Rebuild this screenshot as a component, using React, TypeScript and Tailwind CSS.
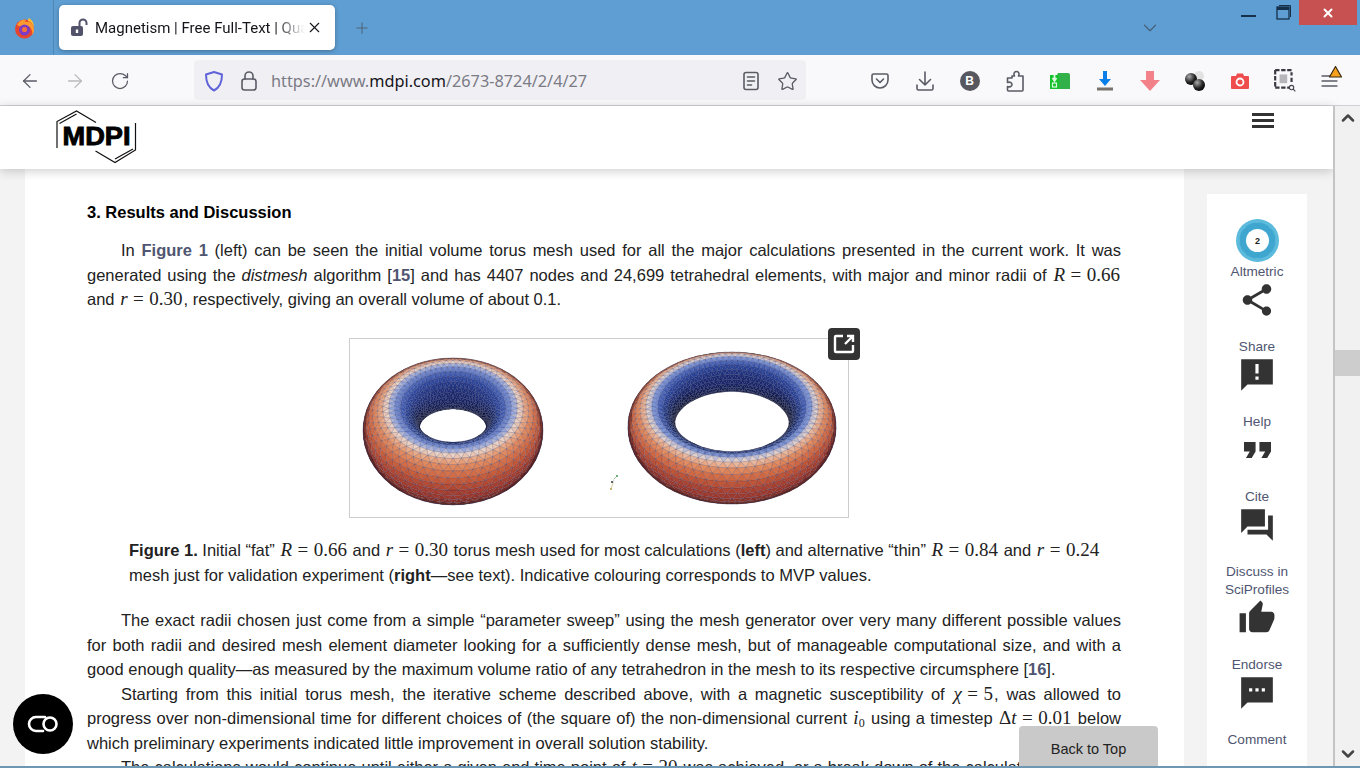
import React, { useMemo } from 'react';
import { ArrowLeft, ArrowRight, RotateCw, Star, Plus, X, ChevronDown, ChevronUp } from 'lucide-react';

const BODY = "font-['Liberation_Sans',Arial,sans-serif]";
const UI = "font-['Noto_Sans','Open_Sans',sans-serif]";

// colour ramp for the torus, t is -1 (inner) to 1 (outer)
const RAMP: [number, number[]][] = [
    [-1, [24, 36, 104]],
    [-0.55, [50, 78, 168]],
    [-0.15, [140, 162, 222]],
    [0.06, [234, 212, 200]],
    [0.36, [232, 150, 104]],
    [0.72, [206, 98, 60]],
    [1, [156, 54, 42]],
];

function rampColor(t: number, shade: number) {
    let i = 0;
    while (i < RAMP.length - 2 && t > RAMP[i + 1][0]) i++;
    const [a, ca] = RAMP[i];
    const [b, cb] = RAMP[i + 1];
    const k = Math.max(0, Math.min(1, (t - a) / (b - a)));
    const c = ca.map((v, n) => Math.round((v + (cb[n] - v) * k) * shade));
    return `rgb(${c[0]},${c[1]},${c[2]})`;
}

// Builds the triangles of a torus, fitted into the given box
function buildTorus(R: number, r: number, sinE: number, N: number, M: number, box: number[]) {
    const cosE = Math.sqrt(1 - sinE * sinE);
    const D = 4.5;
    const pts: { x: number; y: number; z: number; c: number; s: number; nv: number }[][] = [];
    for (let j = 0; j < M; j++) {
        const row = [];
        const th = (j / M) * Math.PI * 2;
        for (let i = 0; i < N; i++) {
            const ph = ((i + (j % 2) * 0.5) / N) * Math.PI * 2;
            const X = (R + r * Math.cos(th)) * Math.cos(ph);
            const Y = (R + r * Math.cos(th)) * Math.sin(ph);
            const Z = r * Math.sin(th);
            const ny = Math.cos(th) * Math.sin(ph);
            const nz = Math.sin(th);
            const depth = -Y * cosE + Z * sinE;
            const p = D / (D - depth);
            row.push({
                x: X * p,
                y: -(Y * sinE + Z * cosE) * p,
                z: depth,
                c: Math.cos(th),
                s: nz,
                nv: -ny * cosE + nz * sinE,
            });
        }
        pts.push(row);
    }
    const all = pts.flat();
    const minX = Math.min(...all.map((p) => p.x));
    const maxX = Math.max(...all.map((p) => p.x));
    const minY = Math.min(...all.map((p) => p.y));
    const maxY = Math.max(...all.map((p) => p.y));
    const sx = box[2] / (maxX - minX);
    const sy = box[3] / (maxY - minY);
    const px = (p: { x: number }) => (box[0] + (p.x - minX) * sx).toFixed(1);
    const py = (p: { y: number }) => (box[1] + (p.y - minY) * sy).toFixed(1);

    const tris: { d: string; z: number; fill: string; o: number }[] = [];
    const add = (a: any, b: any, c: any) => {
        const nv = (a.nv + b.nv + c.nv) / 3;
        if (nv < -0.12) return;
        const t = (a.c + b.c + c.c) / 3;
        const up = Math.max((a.s + b.s + c.s) / 3, 0);
        const shade = Math.min(1, 0.16 + 0.25 * up + Math.pow(Math.max(nv, 0), 0.78));
        tris.push({
            d: `M${px(a)} ${py(a)}L${px(b)} ${py(b)}L${px(c)} ${py(c)}Z`,
            z: (a.z + b.z + c.z) / 3,
            fill: rampColor(t, shade),
            o: 0.14 + 0.32 * Math.max(nv, 0),
        });
    };
    for (let j = 0; j < M; j++) {
        const jn = (j + 1) % M;
        for (let i = 0; i < N; i++) {
            const inx = (i + 1) % N;
            if (j % 2 === 0) {
                add(pts[j][i], pts[j][inx], pts[jn][i]);
                add(pts[j][inx], pts[jn][inx], pts[jn][i]);
            } else {
                add(pts[j][i], pts[j][inx], pts[jn][inx]);
                add(pts[j][i], pts[jn][inx], pts[jn][i]);
            }
        }
    }
    tris.sort((a, b) => a.z - b.z);
    return tris;
}

function TorusFigure() {
    const left = useMemo(() => buildTorus(0.66, 0.3, 0.72, 58, 32, [13, 19, 180, 147]), []);
    const right = useMemo(() => buildTorus(0.84, 0.24, 0.66, 72, 26, [278, 13, 208, 152]), []);
    return (
        <svg width={498} height={178} viewBox="0 0 498 178" className="block blur-[0.3px]">
            {[...left, ...right].map((t, i) => (
                <path key={i} d={t.d} fill={t.fill} stroke="#20265c" strokeOpacity={t.o} strokeWidth={0.45} />
            ))}
            <g strokeWidth={0.6} fill="none">
                <path d="M263 144l1 -4" stroke="#bbb" />
                <path d="M261 150l2 -6" stroke="#c9b36a" />
                <path d="M264 140l3 -3" stroke="#6a9a6a" />
            </g>
            <circle cx={262} cy={143} r={1} fill="#333" />
            <circle cx={267} cy={137} r={1} fill="#4a9a5a" />
            <circle cx={261} cy={150} r={1} fill="#b6a04a" />
        </svg>
    );
}

function FirefoxLogo() {
    return (
        <svg width={22} height={22} viewBox="0 0 22 22">
            <circle cx={10.5} cy={12} r={9.5} fill="#e8452f" />
            <path d="M3 8C5 3 10 2 12 3c-1 1-1 2-1 2 5-1 9 2 9 8 0 2-1 4-2 5 1-4-1-8-4-9-2 0-5 0-6 1C6 9 4 9 3 8z" fill="#ff9a2e" />
            <path d="M15 1c3 2 5 5 5 9-1-3-3-5-6-6 0-1 0-2 1-3z" fill="#ffbd2e" />
            <circle cx={10.5} cy={13} r={5.5} fill="#7b3bc4" />
            <circle cx={10.5} cy={12.5} r={2.6} fill="#f4703a" />
        </svg>
    );
}

function ToolIcon({ children }: { children: React.ReactNode }) {
    return <div className="flex h-[40px] w-[45px] items-center justify-center pt-[2px]">{children}</div>;
}

const G = { fill: 'none', stroke: '#5b5b66', strokeWidth: 1.6, strokeLinecap: 'round', strokeLinejoin: 'round' } as const;

function TabBar() {
    return (
        <div className="flex h-[55px] shrink-0 bg-[#5f9ed2]">
            <div className="flex h-full w-[54px] items-center justify-center border-r border-[#4f86b4] pr-[3px]">
                <FirefoxLogo />
            </div>
            <div className="relative mt-[5px] ml-[5px] flex h-[45px] w-[276px] items-center rounded-[5px] bg-white pl-[11px] shadow-[0_1px_4px_rgba(0,0,0,0.3)]">
                <svg width={19} height={19} viewBox="0 0 19 19" className="shrink-0">
                    <rect x={1} y={8} width={12} height={10} rx={2} fill="#52526a" />
                    <rect x={5.8} y={11.5} width={2.4} height={3.5} fill="#fff" />
                    <path d="M9.5 8V5a3.5 3.5 0 0 1 7 0v2" fill="none" stroke="#52526a" strokeWidth={2} />
                </svg>
                <span className="ml-[6px] w-[210px] overflow-hidden pt-[2px] font-['Roboto',sans-serif] text-[15px] whitespace-nowrap text-[#15141a] [mask-image:linear-gradient(to_right,black_180px,transparent_210px)]">
                    Magnetism | Free Full-Text | Quantitative
                </span>
                <X size={17} strokeWidth={1.6} className="absolute right-[12px] text-[#15141a]" />
            </div>
            <div className="flex h-full w-[54px] items-center justify-center">
                <Plus size={18} strokeWidth={1.4} className="text-[#4f6479]" />
            </div>
            <div className="flex flex-1 items-center justify-end">
                <ChevronDown size={22} strokeWidth={1.3} className="text-[#46607a]" />
            </div>
            <div className="ml-[80px] flex h-[25px] items-start pr-[3px]">
                <div className="mt-[15px] h-[2px] w-[15px] bg-[#14304a]" />
                <svg width={16} height={16} viewBox="0 0 16 16" className="mt-[4px] ml-[20px]">
                    <path d="M3 1.5h11.5V13" fill="none" stroke="#14304a" strokeWidth={1} />
                    <rect x={1} y={3} width={12} height={12} fill="none" stroke="#14304a" strokeWidth={1.3} />
                    <rect x={1} y={3} width={12} height={3} fill="#14304a" />
                </svg>
                <div className="ml-[7px] flex h-[25px] w-[58px] items-center justify-center bg-[#c75050]">
                    <X size={14} strokeWidth={3.4} className="text-white" />
                </div>
            </div>
        </div>
    );
}

function NavBar() {
    return (
        <div className="flex h-[51px] shrink-0 items-center border-b border-[#cfcfd4] bg-[#f9f9fb]">
            <div className="flex w-[194px] items-center pl-[7px]">
                <ToolIcon><ArrowLeft size={22} strokeWidth={1.4} className="text-[#5b5b66]" /></ToolIcon>
                <ToolIcon><ArrowRight size={22} strokeWidth={1.4} className="text-[#b9b9be]" /></ToolIcon>
                <ToolIcon><RotateCw size={20} strokeWidth={1.5} className="text-[#5b5b66]" /></ToolIcon>
            </div>
            <div className="flex h-[40px] w-[612px] items-center rounded-[4px] bg-[#f0f0f4] pt-[2px]">
                <svg width={20} height={22} viewBox="0 0 20 22" className="ml-[10px]">
                    <path d="M10 2l8 2.5c0 8-2 13-8 16C4 17.500 2 12.500 2 4.500z" fill="none" stroke="#5f63d8" strokeWidth={2} strokeLinejoin="round" />
                </svg>
                <svg width={18} height={22} viewBox="0 0 18 22" className="ml-[16px]">
                    <rect x={2} y={9} width={14} height={11} rx={2.500} {...G} />
                    <path d="M5 9V6a4 4 0 0 1 8 0v3" {...G} />
                </svg>
                <span className={`${UI} ml-[13px] text-[16.300px] whitespace-nowrap text-[#7b7b85]`}>
                    https://www.<span className="text-[#15141a]">mdpi.com</span>/2673-8724/2/4/27
                </span>
                <div className="ml-auto flex items-center pr-[8px]">
                    <svg width={16} height={20} viewBox="0 0 16 20" className="mr-[18px]">
                        <rect x={1} y={1.500} width={14} height={17} rx={2} {...G} />
                        <path d="M4.500 6h7M4.500 10h7M4.500 14h4" {...G} />
                    </svg>
                    <Star size={21} strokeWidth={1.5} className="text-[#5b5b66]" />
                </div>
            </div>
            <div className="ml-[51px] flex items-center">
                <ToolIcon>
                    <svg width={18} height={18} viewBox="0 0 18 18">
                        <path d="M2.500 2h13A1.500 1.500 0 0 1 17 3.500V8a8 8 0 0 1-16 0V3.500A1.500 1.500 0 0 1 2.500 2z" {...G} />
                        <path d="M5.500 7L9 10.500 12.500 7" {...G} />
                    </svg>
                </ToolIcon>
                <ToolIcon>
                    <svg width={20} height={22} viewBox="0 0 20 22">
                        <path d="M10 2v13M4.500 9.500L10 15l5.500-5.500M2 15v3.500a1.500 1.500 0 0 0 1.500 1.500h13a1.500 1.500 0 0 0 1.500-1.500V15" {...G} />
                    </svg>
                </ToolIcon>
                <ToolIcon>
                    <div className={`${BODY} flex h-[20px] w-[20px] items-center justify-center rounded-full bg-[#57575f] text-[12px] font-bold text-white`}>B</div>
                </ToolIcon>
                <ToolIcon>
                    <svg width={20} height={22} viewBox="0 0 20 22">
                        <path d="M7 6h2.500C8 3 10 1.500 11.500 1.500S15 3 13.500 6H18v14a1 1 0 0 1-1 1H3.500a1 1 0 0 1-1-1v-3.500C5 17.500 7 16 7 14.500S5 11.500 2.500 12.500V8h4.500z" {...G} />
                    </svg>
                </ToolIcon>
                <ToolIcon>
                    <svg width={21} height={18} viewBox="0 0 21 18">
                        <path d="M1 3h7l1-2h10a2 2 0 0 1 2 2v14H1z" fill="#32b04a" />
                        <path d="M1 3h9v14H1z" fill="#14c22e" />
                        <path d="M5.500 3v5M3.500 6l2 3 2-3" fill="none" stroke="#dff7df" strokeWidth={1.800} />
                        <rect x={3.500} y={11} width={4} height={4} fill="none" stroke="#dff7df" strokeWidth={1.200} />
                    </svg>
                </ToolIcon>
                <ToolIcon>
                    <svg width={18} height={20} viewBox="0 0 18 20">
                        <path d="M7 0h4v8h4l-6 7-6-7h4z" fill="#0b7fe8" />
                        <rect x={1} y={16.500} width={16} height={3} fill="#77726c" />
                    </svg>
                </ToolIcon>
                <ToolIcon>
                    <svg width={20} height={20} viewBox="0 0 20 20">
                        <path d="M6 0h8v9h6L10 20 0 9h6z" fill="#f38189" />
                    </svg>
                </ToolIcon>
                <ToolIcon>
                    <svg width={22} height={22} viewBox="0 0 22 22">
                        <defs>
                            <radialGradient id="ball" cx="0.35" cy="0.3" r="0.8">
                                <stop offset="0" stopColor="#aaa" />
                                <stop offset="0.6" stopColor="#222" />
                                <stop offset="1" stopColor="#000" />
                            </radialGradient>
                        </defs>
                        <circle cx={15} cy={6} r={5} fill="#e2e2e2" />
                        <circle cx={7} cy={9} r={6} fill="url(#ball)" />
                        <circle cx={15} cy={15} r={6} fill="url(#ball)" />
                    </svg>
                </ToolIcon>
                <ToolIcon>
                    <svg width={18} height={16} viewBox="0 0 18 16">
                        <path d="M1 3h4l1-2.500h6L13 3h4a1 1 0 0 1 1 1v11a1 1 0 0 1-1 1H1a1 1 0 0 1-1-1V4a1 1 0 0 1 1-1z" fill="#ef4d4d" />
                        <circle cx={9} cy={9} r={3.500} fill="none" stroke="#fff" strokeWidth={1.800} />
                    </svg>
                </ToolIcon>
                <ToolIcon>
                    <svg width={22} height={24} viewBox="0 0 20 22">
                        <path d="M1 1h15M1 17h13M1 1v16M16 3v3M16 8v5" fill="none" stroke="#3a3a42" strokeWidth={2} strokeDasharray="4 1.500" />
                        <rect x={5} y={5} width={7} height={8} fill="#b5b5ba" />
                        <circle cx={16} cy={17} r={2} fill="none" stroke="#44444c" strokeWidth={1} />
                        <path d="M17.500 18.500L19.500 20.500" stroke="#44444c" strokeWidth={1} />
                    </svg>
                </ToolIcon>
                <div className="relative">
                    <ToolIcon>
                        <svg width={18} height={14} viewBox="0 0 18 14">
                            <path d="M1 2h8M1 7h15M1 12h15" fill="none" stroke="#5b5b66" strokeWidth={1.300} strokeLinecap="round" />
                        </svg>
                    </ToolIcon>
                    <svg width={15} height={14} viewBox="0 0 15 14" className="absolute top-[5px] left-[21px]">
                        <path d="M7.500 1.500L13.500 12H1.500z" fill="#f6a21e" stroke="#3a2a10" strokeWidth={1.200} strokeLinejoin="round" />
                    </svg>
                </div>
            </div>
        </div>
    );
}

function PageHeader() {
    return (
        <div className="relative z-10 flex h-[63px] shrink-0 items-start justify-between bg-white pr-[59px] pl-[56px] shadow-[0_2px_10px_rgba(0,0,0,0.2)]">
            <svg width={81} height={54} viewBox="0 0 81 54" className="mt-[4px]">
                <g fill="none" stroke="#111" strokeWidth={1.200}>
                    <path d="M1 38V11.500L20.500 1 40 12.500" />
                    <path d="M3.500 13.500L20.500 4" />
                    <path d="M79.500 13v27L59 52.500 39.500 41" />
                    <path d="M77 39L59 49" />
                </g>
                <text x={6.500} y={35} fontFamily="Liberation Sans, Arial, sans-serif" fontWeight={700} fontSize={26.500} stroke="#000" strokeWidth={0.9} fill="#000" textLength={68} lengthAdjust="spacingAndGlyphs">MDPI</text>
            </svg>
            <div className="mt-[7px] flex w-[22px] flex-col gap-[3.500px]">
                <div className="h-[2.500px] bg-[#333]" />
                <div className="h-[2.500px] bg-[#333]" />
                <div className="h-[2.500px] bg-[#333]" />
            </div>
        </div>
    );
}

function Mx({ children }: { children: React.ReactNode }) {
    return <span className="mx-[1px] inline-block indent-0 font-['Liberation_Serif',serif] text-[19px] leading-none whitespace-nowrap">{children}</span>;
}

function Eq() {
    return <span className="mx-[5.500px]">=</span>;
}

function Just({ children, first }: { children: React.ReactNode; first?: boolean }) {
    return (
        <div className={`text-justify whitespace-nowrap [text-align-last:justify] ${first ? 'indent-[34px]' : ''}`}>
            {children}
        </div>
    );
}

function Ref({ children }: { children: React.ReactNode }) {
    return <b className="text-[#4f5671]">{children}</b>;
}

function Article() {
    return (
        <div className={`${BODY} h-full w-[1159px] shrink-0 overflow-hidden bg-white pt-[31px] pr-[63px] pl-[62px] text-[16.500px] leading-[24.500px] text-[#222]`}>
            <div className="mb-[14px] leading-[24px] font-bold text-black">3. Results and Discussion</div>
            <Just first>In <Ref>Figure 1</Ref> (left) can be seen the initial volume torus mesh used for all the major calculations presented in the current work. It was</Just>
            <Just>generated using the <i>distmesh</i> algorithm [<Ref>15</Ref>] and has 4407 nodes and 24,699 tetrahedral elements, with major and minor radii of <Mx><i>R</i><Eq />0.66</Mx></Just>
            <div>and <Mx><i>r</i><Eq />0.30</Mx>, respectively, giving an overall volume of about 0.1.</div>

            <div className="relative mt-[26.500px] ml-[262px] h-[180px] w-[500px] border border-[#ccc]">
                <TorusFigure />
                <div className="absolute -top-[11px] -right-[12px] flex h-[32px] w-[32px] items-center justify-center rounded-[4px] bg-[#333]">
                    <svg width={24} height={24} viewBox="0 0 24 24" fill="none" stroke="#fff" strokeWidth={2.400}>
                        <path d="M11 4H4a1 1 0 0 0-1 1v14a1 1 0 0 0 1 1h16a1 1 0 0 0 1-1v-6" />
                        <path d="M15 4h6v6M21 4l-8 8" />
                    </svg>
                </div>
            </div>

            <div className="mt-[20px] pl-[42px] whitespace-nowrap">
                <div><b>Figure 1.</b> Initial “fat” <Mx><i>R</i><Eq />0.66</Mx> and <Mx><i>r</i><Eq />0.30</Mx> torus mesh used for most calculations (<b>left</b>) and alternative “thin” <Mx><i>R</i><Eq />0.84</Mx> and <Mx><i>r</i><Eq />0.24</Mx></div>
                <div>mesh just for validation experiment (<b>right</b>—see text). Indicative colouring corresponds to MVP values.</div>
            </div>

            <div className="mt-[21px]">
                <Just first>The exact radii chosen just come from a simple “parameter sweep” using the mesh generator over very many different possible values</Just>
                <Just>for both radii and desired mesh element diameter looking for a sufficiently dense mesh, but of manageable computational size, and with a</Just>
                <div>good enough quality—as measured by the maximum volume ratio of any tetrahedron in the mesh to its respective circumsphere [<Ref>16</Ref>].</div>
                <Just first>Starting from this initial torus mesh, the iterative scheme described above, with a magnetic susceptibility of <Mx><i>χ</i><Eq />5</Mx>, was allowed to</Just>
                <Just>progress over non-dimensional time for different choices of (the square of) the non-dimensional current <Mx><i>i</i><sub className="text-[12px]">0</sub></Mx> using a timestep <Mx>Δ<i>t</i><Eq />0.01</Mx> below</Just>
                <div>which preliminary experiments indicated little improvement in overall solution stability.</div>
                <Just first>The calculations would continue until either a given end time point of <Mx><i>t</i><Eq />20</Mx> was achieved, or a break down of the calculations occurred</Just>
            </div>
        </div>
    );
}

function MatIcon({ d }: { d: string }) {
    return (
        <svg width={38} height={38} viewBox="0 0 24 24" fill="#333" className="block">
            <path d={d} fillRule="evenodd" />
        </svg>
    );
}

function QuoteIcon() {
    return (
        <div className="flex h-[38px] w-[38px] items-center justify-center">
            <svg width={27} height={16} viewBox="5 7 14 10" preserveAspectRatio="none" fill="#333">
                <path d="M6 17h3l2-4V7H5v6h3zm8 0h3l2-4V7h-6v6h3z" />
            </svg>
        </div>
    );
}

function SideItem({ icon, label }: { icon: React.ReactNode; label: React.ReactNode }) {
    return (
        <div className="flex flex-col items-center">
            {icon}
            <div className="mt-[18.500px] mb-[0.500px] text-center leading-[18px]">{label}</div>
        </div>
    );
}

function Altmetric() {
    return (
        <svg width={43} height={43} viewBox="0 0 43 43">
            <circle cx={21.500} cy={21.500} r={21.500} fill="#5cbbdc" />
            {[0, 45, 90, 135, 180, 225, 270, 315].map((a) => (
                <ellipse key={a} cx={21.500} cy={9} rx={12} ry={5} fill="#2f9cc8" fillOpacity={0.4} transform={`rotate(${a} 21.500 21.500)`} />
            ))}
            <circle cx={21.500} cy={21.500} r={11.500} fill="#fff" />
            <text x={21.500} y={25} textAnchor="middle" fontFamily="Liberation Sans, Arial, sans-serif" fontWeight={700} fontSize={9} fill="#222">2</text>
        </svg>
    );
}

function SidePanel() {
    return (
        <div className={`${BODY} mt-[25px] ml-[23px] flex h-full w-[100px] shrink-0 flex-col items-center bg-white pt-[25px] text-[13.600px] text-[#4f5671]`}>
            <Altmetric />
            <div className="mt-[1px] leading-[18px]">Altmetric</div>
            <SideItem label="Share" icon={<MatIcon d="M18 16.080c-.76 0-1.440.3-1.960.77L8.910 12.700c.05-.23.09-.46.09-.7s-.04-.47-.09-.7l7.050-4.110c.54.5 1.250.81 2.040.81 1.660 0 3-1.340 3-3s-1.340-3-3-3-3 1.340-3 3c0 .24.04.47.09.7L8.040 9.810C7.500 9.310 6.790 9 6 9c-1.660 0-3 1.340-3 3s1.340 3 3 3c.79 0 1.500-.31 2.040-.81l7.120 4.160c-.05.21-.08.43-.08.65 0 1.610 1.310 2.920 2.920 2.920 1.610 0 2.920-1.310 2.920-2.920s-1.310-2.920-2.920-2.920z" />} />
            <SideItem label="Help" icon={<MatIcon d="M22 2H2.010L2 22l4-4h16V2zm-9 9h-2V5h2v6zm0 4h-2v-2h2v2z" />} />
            <SideItem label="Cite" icon={<QuoteIcon />} />
            <SideItem label={<>Discuss in<br />SciProfiles</>} icon={<MatIcon d="M22 6h-3v9H6v3h12l4 4V6zm-5 7V2H2v15l4-4h11z" />} />
            <SideItem label="Endorse" icon={<MatIcon d="M1 21h4V9H1v12zm22-11c0-1.100-.9-2-2-2h-6.310l.95-4.570.03-.32c0-.41-.17-.79-.44-1.060L14.170 1 7.590 7.590C7.220 7.950 7 8.450 7 9v10c0 1.100.9 2 2 2h9c.83 0 1.540-.5 1.840-1.220l3.020-7.050c.09-.23.14-.47.14-.73v-2z" />} />
            <SideItem label="Comment" icon={<MatIcon d="M22 2H2v20l4-4h16V2zM9 11H7V9h2v2zm4 0h-2V9h2v2zm4 0h-2V9h2v2z" />} />
        </div>
    );
}

function Scrollbar() {
    return (
        <div className="z-20 flex w-[27px] shrink-0 flex-col items-center border-l-2 border-[#c4c4c4] bg-[#f1f1f1]">
            <ChevronUp size={20} strokeWidth={3} className="mt-[2px] text-[#444]" />
            <div className="mt-[222px] h-[26px] w-full bg-[#cdcdcd]" />
            <ChevronDown size={20} strokeWidth={3} className="mt-auto mb-[2px] text-[#444]" />
        </div>
    );
}

export default function App() {
    return (
        <div className="relative flex h-[768px] w-[1360px] flex-col overflow-hidden bg-white">
            <TabBar />
            <NavBar />
            <div className="relative flex min-h-0 flex-1">
                <div className="flex min-w-0 flex-1 flex-col bg-[#f3f3f3]">
                    <PageHeader />
                    <div className="flex min-h-0 flex-1 overflow-hidden pl-[25px]">
                        <Article />
                        <SidePanel />
                    </div>
                </div>
                <Scrollbar />
                <div className="absolute bottom-[12px] left-[13px] z-20 flex h-[60px] w-[60px] items-center justify-center rounded-full bg-black">
                    <svg width={32} height={18} viewBox="0 0 32 18" fill="none" stroke="#fff" strokeWidth={2.600} strokeLinecap="round">
                        <path d="M18 2H9a7 7 0 0 0 0 14h7" />
                        <circle cx={23} cy={9} r={6.500} />
                    </svg>
                </div>
                <div className={`${BODY} absolute bottom-0 left-[1019px] z-20 flex h-[40px] w-[139px] items-center justify-center rounded-t-[4px] bg-[#c9c9c9] pt-[8px] text-[14.500px] text-[#222]`}>
                    Back to Top
                </div>
            </div>
            <div className="h-[2px] shrink-0 bg-[#6d97b3]" />
        </div>
    );
}
